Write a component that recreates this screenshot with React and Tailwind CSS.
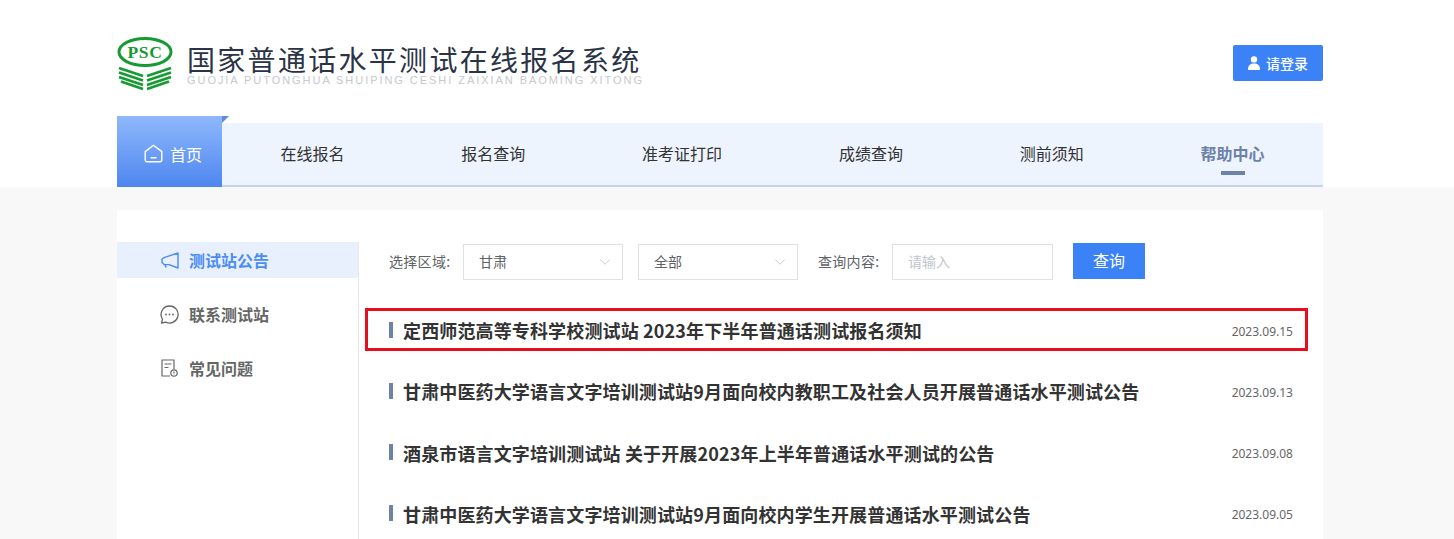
import React from 'react';
import { ChevronDown } from 'lucide-react';

const navItems = ['在线报名', '报名查询', '准考证打印', '成绩查询', '测前须知'];

const notices = [
  { title: '定西师范高等专科学校测试站 2023年下半年普通话测试报名须知', date: '2023.09.15', boxed: true },
  { title: '甘肃中医药大学语言文字培训测试站9月面向校内教职工及社会人员开展普通话水平测试公告', date: '2023.09.13' },
  { title: '酒泉市语言文字培训测试站 关于开展2023年上半年普通话水平测试的公告', date: '2023.09.08' },
  { title: '甘肃中医药大学语言文字培训测试站9月面向校内学生开展普通话水平测试公告', date: '2023.09.05' },
];

const Logo = () => (
  <svg width="56" height="54" viewBox="0 0 56 54" fill="none" className="shrink-0">
    <ellipse cx="28" cy="15" rx="26" ry="13.5" stroke="#169a32" strokeWidth="3" />
    <text x="28" y="21" textAnchor="middle" fontFamily="Liberation Serif, serif" fontWeight="700" fontSize="17.5" letterSpacing="0.6" fill="#169a32">PSC</text>
    <g stroke="#169a32" strokeWidth="2.8">
      <path d="M2 31 26 39" />
      <path d="M2 35.5 26 43.5" />
      <path d="M2 40 26 48" />
      <path d="M4 44.5 26 52" />
      <path d="M54 31 30 39" />
      <path d="M54 35.5 30 43.5" />
      <path d="M54 40 30 48" />
      <path d="M52 44.5 30 52" />
    </g>
  </svg>
);

const HomeIcon = () => (
  <svg width="19" height="19" viewBox="0 0 19 19" fill="none" stroke="#fff" strokeWidth="1.4" strokeLinejoin="round" strokeLinecap="round">
    <path d="M1.2 7.6 9.5 1.2l8.3 6.4v8.2a2 2 0 0 1-2 2H3.2a2 2 0 0 1-2-2z" />
    <path d="M7 13.8h5" />
  </svg>
);

const UserIcon = () => (
  <svg width="12" height="14" viewBox="0 0 12 14" fill="#fff">
    <circle cx="6" cy="3.4" r="3.2" />
    <path d="M0 13.2c0-3.6 2.4-5.6 6-5.6s6 2 6 5.6c0 .5-.3.8-.8.8H.8c-.5 0-.8-.3-.8-.8z" />
  </svg>
);

const HornIcon = () => (
  <svg width="18" height="17" viewBox="0 0 18 17" fill="none" stroke="#4b8cf5" strokeWidth="1.4" strokeLinejoin="round">
    <path d="M17 1v15L8 12.6H3.2L1 10.4V7.2l2-1.6z" />
    <path d="M4 12.6 5.2 15.6" />
  </svg>
);

const ChatIcon = () => (
  <svg width="19" height="19" viewBox="0 0 19 19" fill="none">
    <path d="M9.5 1a8.5 8.5 0 1 1-3.7 16.1L1.6 18l.9-3.8A8.5 8.5 0 0 1 9.5 1z" stroke="#666" strokeWidth="1.3" strokeLinejoin="round" />
    <circle cx="6" cy="9.5" r="0.9" fill="#666" />
    <circle cx="9.5" cy="9.5" r="0.9" fill="#666" />
    <circle cx="13" cy="9.5" r="0.9" fill="#666" />
  </svg>
);

const DocIcon = () => (
  <svg width="17" height="18" viewBox="0 0 17 18" fill="none" stroke="#666" strokeWidth="1.2">
    <path d="M9 17H1V1h12v9" />
    <path d="M3.5 5h7M3.5 8.5h4" />
    <circle cx="13" cy="14" r="3.2" />
    <path d="M13 12.4v2M13 15.2v.4" />
  </svg>
);

const sideItems = [
  { label: '测试站公告', icon: <HornIcon />, active: true },
  { label: '联系测试站', icon: <ChatIcon /> },
  { label: '常见问题', icon: <DocIcon /> },
];

const Select = ({ value }) => (
  <div className="w-[160px] h-[36px] border border-[#dfe1e8] flex items-center justify-between pl-[15px] pr-[8px] text-[14px] text-[#606266]">
    <span className="pb-[2px]">{value}</span>
    <ChevronDown size={18} strokeWidth={1} color="#b5b8c0" />
  </div>
);

export default function App() {
  return (
    <div className="h-[539px] overflow-hidden bg-[#f8f8f8] text-[#333] font-['Noto_Sans_CJK_SC','Noto_Sans',sans-serif]">
      <div className="bg-white">
        <div className="w-[1206px] ml-[117px]">
          {/* Header */}
          <div className="h-[116px] flex items-start justify-between">
            <div className="flex items-start gap-[14px] pt-[37px]">
              <Logo />
              <div className="w-[460px]">
                <div className="text-[28px] leading-[30px] mt-[7px] tracking-[2.3px] text-[#2b3446] whitespace-nowrap">国家普通话水平测试在线报名系统</div>
                <div className="text-[11px] leading-[12px] tracking-[1.95px] text-[#c6c9ce] whitespace-nowrap font-['Liberation_Sans',sans-serif]">GUOJIA PUTONGHUA SHUIPING CESHI ZAIXIAN BAOMING XITONG</div>
              </div>
            </div>
            <div className="mt-[45px] w-[90px] h-[36px] rounded-[2px] bg-[#3b82f6] flex items-center justify-center gap-[6px] text-[14px] font-medium text-white">
              <UserIcon />
              <span>请登录</span>
            </div>
          </div>

          {/* Nav */}
          <div className="relative h-[71px] flex items-end">
            <div className="relative w-[105px] h-[71px] shrink-0 bg-gradient-to-b from-[#8fb8fc] to-[#4d86ee] flex items-center justify-center gap-[7px] pt-[4px] pl-[7px] text-[16px] text-white">
              <HomeIcon />
              <span>首页</span>
              <div className="absolute left-full top-0 w-0 h-0 border-t-[7px] border-r-[7px] border-t-[#5f8cdc] border-r-transparent" />
            </div>
            <div className="flex-1 h-[64px] bg-[#edf4fe] border-b-2 border-[#c3d4e8] flex items-center justify-around pb-[2px] text-[16px] text-[#333]">
              {navItems.map((item) => (
                <span key={item}>{item}</span>
              ))}
              <span className="relative font-bold text-[#6d82a8]">
                帮助中心
                <span className="absolute left-[20px] top-[30px] w-[24px] h-[4px] bg-[#6d82a8]" />
              </span>
            </div>
          </div>
        </div>
      </div>

      {/* Main card */}
      <div className="w-[1206px] ml-[117px] mt-[23px] bg-white pt-[32px] flex h-[400px]">
        <div className="w-[242px] shrink-0 border-r border-[#e8e8e8]">
          {sideItems.map((item) => (
            <div
              key={item.label}
              className={`h-[36px] mb-[18px] pl-[43px] flex items-center gap-[10px] text-[16px] font-bold ${
                item.active ? 'bg-[#e8f0fd] text-[#4b8cf5]' : 'text-[#666]'
              }`}
            >
              <span className="w-[19px] flex justify-center">{item.icon}</span>
              <span>{item.label}</span>
            </div>
          ))}
        </div>

        <div className="flex-1 pl-[6px] pr-[15px]">
          <div className="flex items-center h-[38px] mt-[1px] pl-[24px] text-[14px] text-[#606266]">
            <span className="w-[74px] pb-[2px] tracking-[0.3px]">选择区域:</span>
            <Select value="甘肃" />
            <div className="w-[15px]" />
            <Select value="全部" />
            <span className="ml-[20px] w-[74px] pb-[2px] tracking-[0.3px]">查询内容:</span>
            <div className="w-[161px] h-[36px] border border-[#dfe1e8] flex items-center pl-[15px] pb-[2px] text-[#c0c4cc]">请输入</div>
            <div className="ml-[20px] w-[72px] h-[36px] -mt-[2px] pb-[2px] bg-[#3b82f6] flex items-center justify-center text-[16px] text-white">查询</div>
          </div>

          <div className="mt-[27px]">
            {notices.map((n) => (
              <div
                key={n.date}
                className={`h-[43px] mb-[18.3px] border-3 flex items-center justify-between pl-[21px] pr-[12px] ${
                  n.boxed ? 'border-[#e60f1f]' : 'border-transparent'
                }`}
              >
                <div className="flex items-center gap-[10px] text-[18px] font-bold tracking-[0.14px] text-[#333] whitespace-nowrap">
                  <span className="w-[4px] h-[16px] bg-[#6d82a8]" />
                  <span className="pt-[2px]">{n.title}</span>
                </div>
                <span className="text-[12px] pt-[4px] text-[#666] font-['Noto_Sans',sans-serif]">{n.date}</span>
              </div>
            ))}
          </div>
        </div>
      </div>
    </div>
  );
}
